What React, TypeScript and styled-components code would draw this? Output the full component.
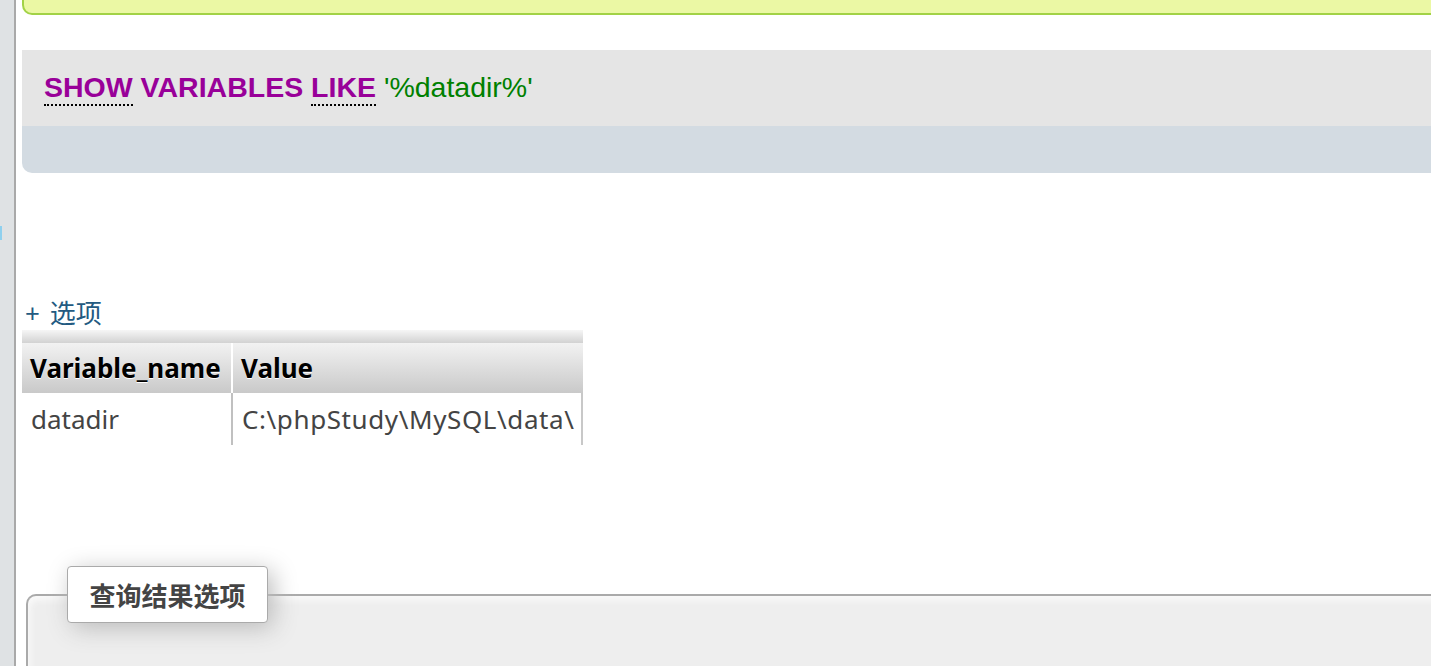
import React from "react";
import styled, { createGlobalStyle } from "styled-components";

const GlobalStyle = createGlobalStyle`
  html, body { margin: 0; padding: 0; background: #fff; overflow: hidden; }
  body { font-family: "Noto Sans", "Noto Sans CJK SC", sans-serif; }
`;

const Page = styled.div`
  display: flex;
  width: 1431px;
  height: 666px;
  overflow: hidden;
`;

const Sidebar = styled.div`
  position: relative;
  flex: 0 0 14px;
  background: #dfe2e4;
  border-right: 2px solid #a9a9a9;
`;

const ResizeMark = styled.span`
  position: absolute;
  left: 0;
  top: 226px;
  width: 2px;
  height: 14px;
  background: #8fd0ee;
`;

const Main = styled.main`
  flex: 1;
  min-width: 0;
  padding-left: 6px;
  display: flex;
  flex-direction: column;
  margin-right: -20px;
  & > * { flex-shrink: 0; }
`;

const SuccessBox = styled.div`
  height: 13px;
  background: #ebf8a4;
  border: 2px solid #a2d246;
  border-top: none;
  border-radius: 0 0 0 10px;
`;

const SqlOuter = styled.div`
  margin-top: 35px;
  border-radius: 0 0 0 10px;
  overflow: hidden;
`;

const SqlCode = styled.div`
  height: 76px;
  background: #e5e5e5;
  padding-left: 22px;
  box-sizing: border-box;
  padding-top: 19px;
  font-family: "Liberation Sans", Arial, sans-serif;
  font-size: 28.5px;
  line-height: 36px;
  white-space: nowrap;
`;

const Keyword = styled.span<{ $abbr?: boolean }>`
  color: #990099;
  font-weight: bold;
  ${(p) => (p.$abbr ? "border-bottom: 2px dotted #000; padding-bottom: 1px;" : "")}
`;

const StringLit = styled.span`
  color: #008000;
`;

const SqlTools = styled.div`
  height: 47px;
  background: #d3dbe2;
`;

const OptionsLink = styled.a`
  margin-top: 123px;
  align-self: flex-start;
  color: #235a81;
  font-size: 26px;
  line-height: 34px;
  text-decoration: none;
  padding-left: 3px;
  word-spacing: 3px;
`;

const ResultTable = styled.table`
  border-collapse: separate;
  border-spacing: 0;
  align-self: flex-start;
  width: 561px;
  font-size: 26px;
`;

const SpacerHead = styled.th`
  height: 13px;
  padding: 0;
  background: linear-gradient(#f6f6f6, #d2d2d2);
`;

const HeadCell = styled.th<{ $last?: boolean }>`
  height: 50px;
  padding: 0 8px;
  text-align: left;
  font-weight: bold;
  color: #000;
  text-shadow: 0 1px 0 #fff;
  background: linear-gradient(#f2f2f2, #c9c9c9);
  border-right: ${(p) => (p.$last ? "none" : "2px solid #fff")};
`;

const DataCell = styled.td<{ $first?: boolean }>`
  height: 52px;
  padding: ${(p) => (p.$first ? "0 9px" : "0 6px 0 9px")};
  color: #444;
  white-space: nowrap;
  letter-spacing: ${(p) => (p.$first ? "0" : "0.6px")};
  border-right: 2px solid ${(p) => (p.$first ? "#c0c0c0" : "#c8c8c8")};
`;

const Fieldset = styled.fieldset`
  margin: 121px 0 0 4px;
  padding: 0 0 80px 39px;
  border: 2px solid #aaa;
  border-right: none;
  border-bottom: none;
  border-radius: 10px 0 0 0;
  background: #eee;
  box-shadow: inset 2px 4px 6px #fafafa;
`;

const Legend = styled.legend`
  box-sizing: border-box;
  height: 57px;
  width: 201px;
  padding: 0;
  display: flex;
  align-items: center;
  justify-content: center;
  font-weight: bold;
  font-size: 26px;
  color: #444;
  background: #fff;
  border: 1.5px solid #aaa;
  border-radius: 4px;
  box-shadow: 5px 5px 24px #bbb;
`;

export default function App() {
  return (
    <>
      <GlobalStyle />
      <Page>
        <Sidebar>
          <ResizeMark />
        </Sidebar>
        <Main>
          <SuccessBox />
          <SqlOuter>
            <SqlCode>
              <Keyword $abbr>SHOW</Keyword> <Keyword>VARIABLES</Keyword>{" "}
              <Keyword $abbr>LIKE</Keyword> <StringLit>'%datadir%'</StringLit>
            </SqlCode>
            <SqlTools />
          </SqlOuter>
          <OptionsLink href="#">+ 选项</OptionsLink>
          <ResultTable>
            <thead>
              <tr>
                <SpacerHead colSpan={2} />
              </tr>
              <tr>
                <HeadCell style={{ width: 193 }}>Variable_name</HeadCell>
                <HeadCell $last>Value</HeadCell>
              </tr>
            </thead>
            <tbody>
              <tr>
                <DataCell $first>datadir</DataCell>
                <DataCell>C:\phpStudy\MySQL\data\</DataCell>
              </tr>
            </tbody>
          </ResultTable>
          <Fieldset>
            <Legend>查询结果选项</Legend>
          </Fieldset>
        </Main>
      </Page>
    </>
  );
}
